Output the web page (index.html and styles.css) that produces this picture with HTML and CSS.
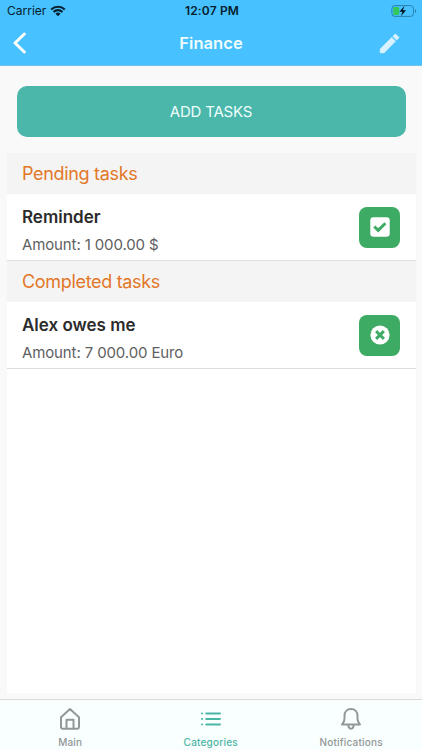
FILE: index.html
```html
<!DOCTYPE html>
<html lang="en">
<head>
  <meta charset="UTF-8">
  <meta name="viewport" content="width=device-width, initial-scale=1.0">
  <title>Finance</title>
  <link rel="stylesheet" href="styles.css">
</head>
<body>
  <header class="header">
    <!-- Status bar -->
    <div class="status-bar">
      <div class="carrier">
        <span>Carrier</span>
        <svg width="16" height="12" viewBox="0 0 16 12">
          <path d="M1.2 4.5a9.7 9.7 0 0 1 13.6 0M3.5 7a6.4 6.4 0 0 1 9 0" fill="none" stroke="#06202e" stroke-width="2.1"/>
          <path d="M8 11.3 5.5 8.8a3.6 3.6 0 0 1 5 0z" fill="#06202e"/>
        </svg>
      </div>
      <div class="time">12:07 PM</div>
      <div class="battery">
        <svg width="26" height="12" viewBox="0 0 26 12">
          <rect x=".9" y=".6" width="21.6" height="10.8" rx="3" fill="none" stroke="#2583ad"/>
          <path d="M24 4v4q1.2-.6 1.2-2T24 4z" fill="#2583ad"/>
          <rect x="2.3" y="2" width="5.9" height="8" rx="1.2" fill="#34c759"/>
          <path d="M13.6.8 8.4 6.7h3.1L9.8 11.2l5.3-6h-3.2z" fill="#041018"/>
        </svg>
      </div>
    </div>

    <div class="nav">
      <a class="nav-side" aria-label="Back">
        <svg width="14" height="22" viewBox="0 0 14 22">
          <path d="M12.3 2 3 11l9.3 9" fill="none" stroke="#fff" stroke-width="3" stroke-linecap="round" stroke-linejoin="round"/>
        </svg>
      </a>
      <h1>Finance</h1>
      <a class="nav-side nav-edit" aria-label="Edit">
        <svg width="25" height="25" viewBox="0 0 24 24">
          <path fill="#d8f1ff" stroke="#d8f1ff" stroke-width=".5" stroke-linejoin="round" d="M3 17.25V21h3.75L17.81 9.94l-3.75-3.75L3 17.25zM20.71 7.04a1 1 0 0 0 0-1.41l-2.34-2.34a1 1 0 0 0-1.41 0l-1.83 1.83 3.75 3.75 1.83-1.83z"/>
        </svg>
      </a>
    </div>
  </header>

  <main class="content">
    <button class="add-btn">ADD TASKS</button>

    <div class="task-list">
      <h2>Pending tasks</h2>
      <div class="task">
        <div class="task-info">
          <div class="task-name">Reminder</div>
          <div class="task-amount">Amount: 1 000.00 $</div>
        </div>
        <button class="task-btn" aria-label="Complete">
          <svg width="20" height="20" viewBox="0 0 20 20">
            <rect x=".3" y=".3" width="19.4" height="19.4" rx="3" fill="#fff"/>
            <path d="m4.3 9.5 3.9 3.9 7.2-7.2" fill="none" stroke="#3dab63" stroke-width="2.9"/>
          </svg>
        </button>
      </div>

      <h2>Completed tasks</h2>
      <div class="task">
        <div class="task-info">
          <div class="task-name">Alex owes me</div>
          <div class="task-amount">Amount: 7 000.00 Euro</div>
        </div>
        <button class="task-btn" aria-label="Reopen">
          <svg width="20" height="20" viewBox="0 0 20 20">
            <circle cx="10" cy="10" r="9.6" fill="#fff"/>
            <path d="m7.2 7.2 5.6 5.6m0-5.6-5.6 5.6" fill="none" stroke="#3dab63" stroke-width="3" stroke-linecap="square"/>
          </svg>
        </button>
      </div>
    </div>
  </main>

  <!-- Bottom tabs -->
  <nav class="tabs">
    <a class="tab">
      <svg width="22" height="24" viewBox="0 0 22 24">
        <path d="M2 10.2 11 2l9 8.2V20a1.7 1.7 0 0 1-1.7 1.7H3.7A1.7 1.7 0 0 1 2 20zM7.5 21.5v-8.8h7v8.8"/>
      </svg>
      <span>Main</span>
    </a>
    <a class="tab active">
      <svg width="22" height="24" viewBox="0 0 22 24">
        <path d="M6.3 6.6H20M6.3 12H20M6.3 17.4H20" stroke-linecap="round"/>
        <path d="M2 6.6h.01M2 12h.01M2 17.4h.01" stroke-linecap="round"/>
      </svg>
      <span>Categories</span>
    </a>
    <a class="tab">
      <svg width="22" height="24" viewBox="0 0 22 24">
        <path d="M2 17.4c1.9-1.8 2.5-3.1 2.5-6V8.7C4.5 4.7 7 2 11 2s6.5 2.7 6.5 6.7v2.7c0 2.9.6 4.2 2.5 6zM8.3 17.6c0 2.7 1 4.1 2.7 4.1s2.7-1.4 2.7-4.1"/>
      </svg>
      <span>Notifications</span>
    </a>
  </nav>
</body>
</html>
```
FILE: styles.css
```css
* {
  box-sizing: border-box;
}

body {
  margin: 0;
  height: 100vh;
  display: flex;
  flex-direction: column;
  background: #f9f9f9;
  font-family: Inter, "Liberation Sans", sans-serif;
  color: #2b2b2b;
}

h1, h2 {
  margin: 0;
}

button {
  border: none;
  padding: 0;
  font-family: inherit;
}

svg {
  display: block;
}

/* Header */
.header {
  height: 66px;
  background: #47c1ff;
  border-bottom: 1px solid #70c5ee;
}

.status-bar {
  display: grid;
  grid-template-columns: 1fr auto 1fr;
  align-items: center;
  height: 21px;
  padding: 0 5px 0 7px;
  font-size: 12px;
  color: #06202e;
}

.carrier {
  display: flex;
  align-items: center;
  gap: 4px;
}

.time {
  font-weight: 600;
  font-size: 12px;
  letter-spacing: 0.15px;
}

.battery {
  justify-self: end;
}

.nav {
  display: grid;
  grid-template-columns: 60px 1fr 60px;
  align-items: center;
  height: 44px;
}

.nav-side {
  padding-left: 12px;
}

.nav-edit {
  justify-self: end;
  padding: 0 20px 0 0;
}

.nav h1 {
  font-size: 16.6px;
  font-weight: 600;
  text-align: center;
  color: #eefcff;
}

/* Content */
.content {
  flex: 1;
  display: flex;
  flex-direction: column;
  gap: 16px;
  padding: 20px 6.5px 6px;
}

.add-btn {
  height: 51px;
  margin: 0 10px;
  border-radius: 10px;
  background: #4bb6aa;
  color: #effffc;
  font-size: 15px;
  letter-spacing: -0.2px;
}

.task-list {
  flex: 1;
  background: #fff;
}

.task-list h2 {
  height: 41px;
  padding-left: 15.5px;
  background: #f4f4f4;
  color: #e27728;
  font-size: 18px;
  font-weight: 400;
  line-height: 41px;
  letter-spacing: -0.32px;
}

.task {
  display: flex;
  justify-content: space-between;
  align-items: center;
  height: 67px;
  padding: 0 15.5px;
  border-bottom: 1px solid #dedede;
}

.task-info {
  padding-top: 7px;
}

.task-name {
  font-size: 17px;
  font-weight: 600;
  line-height: 27px;
}

.task-amount {
  font-size: 15px;
  line-height: 27px;
  letter-spacing: -0.12px;
  color: #5f5f5f;
}

.task-btn {
  display: flex;
  justify-content: center;
  align-items: center;
  width: 41px;
  height: 41px;
  border-radius: 8px;
  background: #3dab63;
}

/* Tabs */
.tabs {
  display: grid;
  grid-template-columns: repeat(3, 1fr);
  height: 51px;
  padding-right: 0.6px;
  border-top: 1px solid #d8dada;
  background: #f9fefe;
}

.tab {
  display: flex;
  flex-direction: column;
  align-items: center;
  padding-top: 7px;
  font-size: 10px;
  font-weight: 500;
  line-height: 12px;
  letter-spacing: 0.2px;
  color: #929797;
}

.tab span {
  margin-top: 5px;
}

.tab svg {
  fill: none;
  stroke: currentColor;
  stroke-width: 2;
  stroke-linejoin: round;
}

.tab.active {
  color: #4bb6a5;
}
```
